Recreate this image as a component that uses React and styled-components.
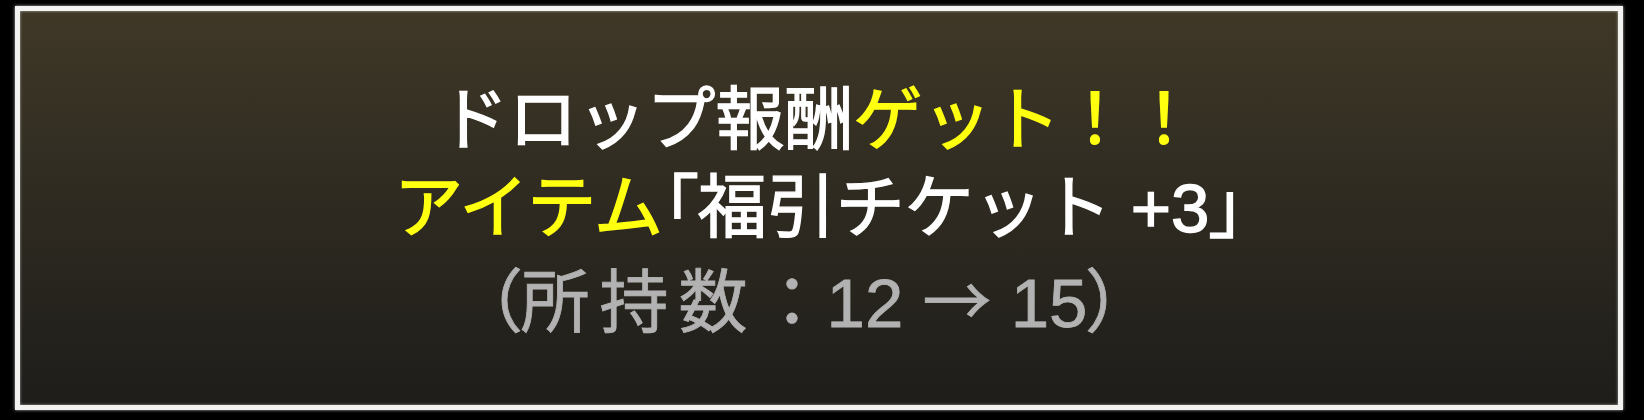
import styled, { createGlobalStyle } from "styled-components";

const GlobalStyle = createGlobalStyle`
  html, body {
    margin: 0;
    padding: 0;
    background: #000;
  }
  body {
    width: 1644px;
    height: 420px;
    overflow: hidden;
  }
`;

const Stage = styled.div`
  width: 1644px;
  height: 420px;
  padding: 6px 21px 10px 15px;
  box-sizing: border-box;
  background: #000;
`;

const Frame = styled.div`
  width: 100%;
  height: 100%;
  box-sizing: border-box;
  border: 5px solid #f2f2f0;
  box-shadow: 0 0 3px rgba(255, 255, 255, 0.7),
    inset 0 0 3px rgba(255, 255, 255, 0.6);
  background: linear-gradient(to bottom, #3f3827 0%, #2e2a21 50%, #1e1d1a 100%);
  display: flex;
  flex-direction: column;
  align-items: center;
  justify-content: center;
  padding-top: 8px;
`;

const Line = styled.div`
  font-family: "Liberation Sans", "Noto Sans CJK JP", sans-serif;
  font-size: 69px;
  line-height: 88px;
  font-weight: 400;
  color: ${(p) => (p.$sub ? "#b2b2b2" : "#ffffff")};
  -webkit-text-stroke: ${(p) => (p.$sub ? "0.8px" : "1.4px")} currentColor;
  white-space: nowrap;
  padding-right: ${(p) => (p.$sub ? "30px" : "0")};
`;

const Hi = styled.span`
  color: #ffff10;
`;

/* brackets set proportionally, tight against their neighbours */
const Punct = styled.span`
  font-feature-settings: "palt";
`;

const Wide = styled.span`
  letter-spacing: 10px;
`;

const Arrow = styled.span`
  font-family: "Noto Sans CJK JP", sans-serif;
`;

export default function App() {
  return (
    <>
      <GlobalStyle />
      <Stage>
        <Frame>
          <Line>
            ドロップ報酬<Hi>ゲット！！</Hi>
          </Line>
          <Line>
            <Hi>アイテム</Hi>
            <Punct>「</Punct>福引チケット +3<Punct>」</Punct>
          </Line>
          <Line $sub>
            <Punct>（</Punct>
            <Wide>所持数</Wide>：12 <Arrow>→</Arrow> 15<Punct>）</Punct>
          </Line>
        </Frame>
      </Stage>
    </>
  );
}
